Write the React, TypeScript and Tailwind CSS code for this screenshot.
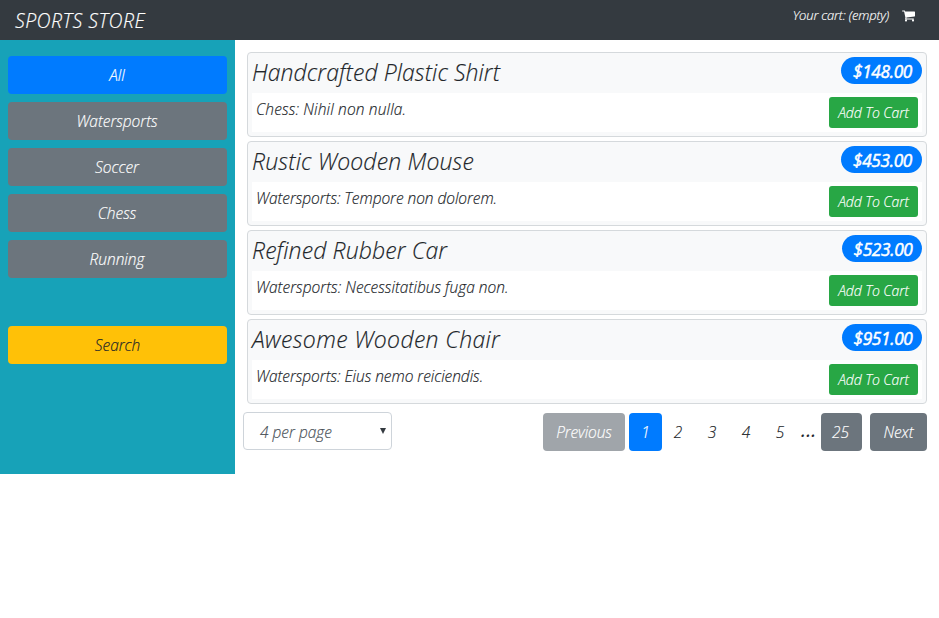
const categories = [
  { name: "All", style: "bg-[#007bff]" },
  { name: "Watersports", style: "bg-[#6c757d]" },
  { name: "Soccer", style: "bg-[#6c757d]" },
  { name: "Chess", style: "bg-[#6c757d]" },
  { name: "Running", style: "bg-[#6c757d]" },
];

const products = [
  { name: "Handcrafted Plastic Shirt", text: "Chess: Nihil non nulla.", price: "$148.00", badge: "w-[81px]", title: "tracking-[0.08px]", body: "tracking-[0.14px]" },
  { name: "Rustic Wooden Mouse", text: "Watersports: Tempore non dolorem.", price: "$453.00", badge: "w-[81px]", title: "tracking-[0.15px]", body: "tracking-[-0.07px]" },
  { name: "Refined Rubber Car", text: "Watersports: Necessitatibus fuga non.", price: "$523.00", badge: "w-[80px]", title: "tracking-[0.12px]", body: "tracking-[0px]" },
  { name: "Awesome Wooden Chair", text: "Watersports: Eius nemo reiciendis.", price: "$951.00", badge: "w-[80px]", title: "tracking-[0.34px]", body: "tracking-[-0.06px]" },
];

const pages = ["2", "3", "4", "5"];

function CartIcon() {
  return (
    <svg viewBox="0 256 1664 1408" className="mt-[5px] h-[12px] w-[13px] fill-white">
      <path d="M640 1536q0 52-38 90t-90 38-90-38-38-90 38-90 90-38 90 38 38 90zm896 0q0 52-38 90t-90 38-90-38-38-90 38-90 90-38 90 38 38 90zm128-1088v512q0 24-16.5 42.5t-40.5 21.5l-1044 122q13 60 13 70 0 16-24 64h920q26 0 45 19t19 45-19 45-45 19h-1024q-26 0-45-19t-19-45q0-11 8-31.5t16-36 21.5-40 15.5-29.5l-177-823h-204q-26 0-45-19t-19-45 19-45 45-19h256q16 0 28.5 6.5t19.5 15.5 13 24.5 8 26 5.5 29.5 4.5 26h1201q26 0 45 19t19 45z" />
    </svg>
  );
}

function ProductCard({ name, text, price, badge, title, body }: (typeof products)[number]) {
  return (
    <article className="h-[85px] rounded border border-[#d5d9dc] bg-[#f8f9fa] p-1">
      <div className="flex h-9 items-start justify-between">
        <h4 className={`${title} text-[23px] leading-[30px] whitespace-nowrap`}>{name}</h4>
        <span className={`${badge} flex h-[27px] items-center justify-center rounded-full bg-[#007bff] pt-[2px] pl-[2px] text-[17.3px] font-normal tracking-[-0.35px] text-white [-webkit-text-stroke:0.5px]`}>
          {price}
        </span>
      </div>
      <div className="flex h-[39px] items-start justify-between bg-white p-1">
        <p className={`${body} leading-[24px]`}>{text}</p>
        <button className="h-[31px] w-[89px] rounded-[3px] bg-[#28a745] pt-px text-[14px] italic tracking-[-0.1px] text-white">
          Add To Cart
        </button>
      </div>
    </article>
  );
}

export default function App() {
  return (
    <div className="h-[618px] w-[939px] overflow-hidden bg-white font-['Open_Sans','Noto_Sans',sans-serif] text-[15.5px] leading-[24px] font-light italic text-[#212529] [-webkit-text-stroke:0.15px]">
      <header className="flex h-10 items-start justify-between bg-[#343a40] pr-6 pl-[15px] text-white">
        <span className="text-[19.5px] leading-[42px] tracking-[0.45px]">SPORTS STORE</span>
        <div className="flex items-start gap-[13px] pt-[5px]">
          <span className="text-[13px] leading-5 tracking-[-0.18px]">Your cart: (empty)</span>
          <CartIcon />
        </div>
      </header>
      <div className="flex h-[434px]">
        <aside className="flex w-[235px] flex-col gap-2 bg-[#17a2b8] px-2 pt-4">
          {categories.map((c) => (
            <button key={c.name} className={`${c.style} h-[38px] rounded pr-px italic tracking-[-0.05px] text-white`}>
              {c.name}
            </button>
          ))}
          <button className="mt-10 h-[38px] rounded bg-[#ffc107] italic tracking-[-0.05px]">Search</button>
        </aside>
        <main className="flex-1 pt-3 pr-3 pl-2">
          <div className="flex flex-col gap-1 pl-1">
            {products.map((p) => (
              <ProductCard key={p.name} {...p} />
            ))}
          </div>
          <div className="flex items-start justify-between pt-2">
            <div className="flex h-[38px] w-[149px] items-center justify-between rounded border border-[#ced4da] pr-[5px] pl-4 text-[#495057]">
              <span className="pt-[2px] tracking-[-0.02px]">4 per page</span>
              <svg viewBox="0 0 6 6" className="size-[6px] fill-[#343a40]"><path d="M0 0h6L3 6z" /></svg>
            </div>
            <nav className="flex pt-px tracking-[-0.1px]">
              <button className="mr-1 h-[38px] w-[82px] rounded bg-[#a0a5aa] italic text-white">Previous</button>
              <button className="h-[38px] w-[33px] rounded bg-[#007bff] italic text-white">1</button>
              {pages.map((p) => (
                <button key={p} className="h-[38px] w-[34px] pr-[2px] italic">{p}</button>
              ))}
              <span className="w-[23px] pt-[6px] pr-[1px] text-center font-semibold tracking-[1px]">...</span>
              <button className="mr-2 h-[38px] w-[41px] rounded bg-[#6c757d] pr-[2px] italic text-white">25</button>
              <button className="h-[38px] w-[57px] rounded bg-[#6c757d] italic text-white">Next</button>
            </nav>
          </div>
        </main>
      </div>
    </div>
  );
}
